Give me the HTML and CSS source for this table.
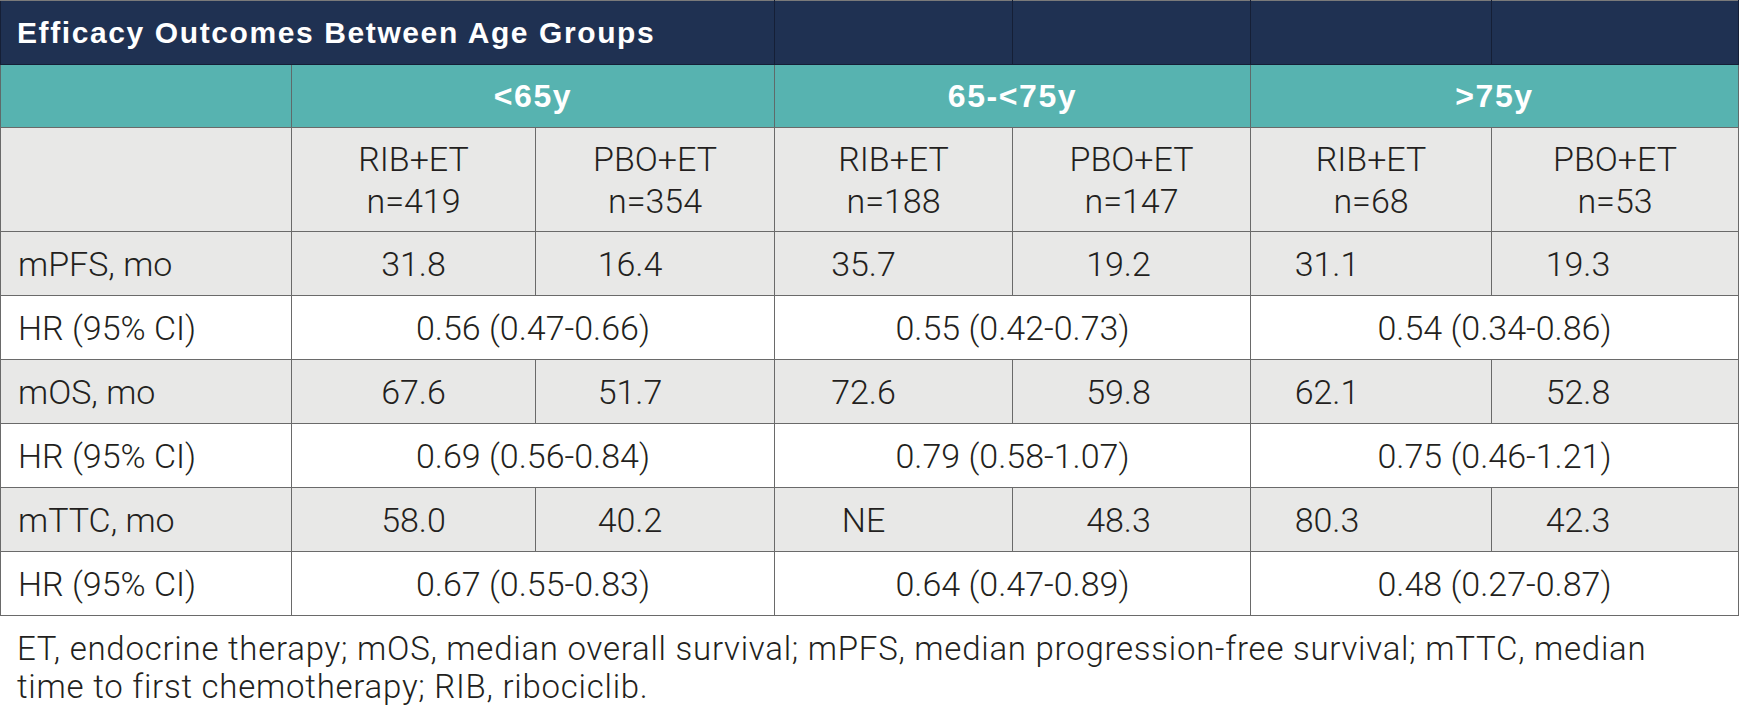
FILE: index.html
```html
<!DOCTYPE html>
<html lang="en">
<head>
<meta charset="utf-8">
<title>Efficacy Outcomes Between Age Groups</title>
<link rel="stylesheet" href="styles.css">
</head>
<body>
<table class="outcomes">
  <colgroup>
    <col class="w-label">
    <col class="w-1">
    <col class="w-2">
    <col class="w-3">
    <col class="w-4">
    <col class="w-5">
    <col class="w-6">
  </colgroup>
  <thead>
    <tr class="row-title">
      <th colspan="3" class="title">Efficacy Outcomes Between Age Groups</th>
      <th></th>
      <th></th>
      <th></th>
      <th></th>
    </tr>
    <tr class="row-groups">
      <th></th>
      <th colspan="2">&lt;65y</th>
      <th colspan="2">65-&lt;75y</th>
      <th colspan="2">&gt;75y</th>
    </tr>
    <tr class="row-arms shade">
      <th></th>
      <th>RIB+ET<br>n=419</th>
      <th>PBO+ET<br>n=354</th>
      <th>RIB+ET<br>n=188</th>
      <th>PBO+ET<br>n=147</th>
      <th>RIB+ET<br>n=68</th>
      <th>PBO+ET<br>n=53</th>
    </tr>
  </thead>
  <tbody>
    <tr class="shade">
      <td class="label">mPFS, mo</td>
      <td class="v v1">31.8</td>
      <td class="v v2">16.4</td>
      <td class="v v3">35.7</td>
      <td class="v v4">19.2</td>
      <td class="v v5">31.1</td>
      <td class="v v6">19.3</td>
    </tr>
    <tr>
      <td class="label">HR (95% CI)</td>
      <td colspan="2" class="hr">0.56 (0.47-0.66)</td>
      <td colspan="2" class="hr">0.55 (0.42-0.73)</td>
      <td colspan="2" class="hr">0.54 (0.34-0.86)</td>
    </tr>
    <tr class="shade">
      <td class="label">mOS, mo</td>
      <td class="v v1">67.6</td>
      <td class="v v2">51.7</td>
      <td class="v v3">72.6</td>
      <td class="v v4">59.8</td>
      <td class="v v5">62.1</td>
      <td class="v v6">52.8</td>
    </tr>
    <tr>
      <td class="label">HR (95% CI)</td>
      <td colspan="2" class="hr">0.69 (0.56-0.84)</td>
      <td colspan="2" class="hr">0.79 (0.58-1.07)</td>
      <td colspan="2" class="hr">0.75 (0.46-1.21)</td>
    </tr>
    <tr class="shade">
      <td class="label">mTTC, mo</td>
      <td class="v v1">58.0</td>
      <td class="v v2">40.2</td>
      <td class="v v3">NE</td>
      <td class="v v4">48.3</td>
      <td class="v v5">80.3</td>
      <td class="v v6">42.3</td>
    </tr>
    <tr>
      <td class="label">HR (95% CI)</td>
      <td colspan="2" class="hr">0.67 (0.55-0.83)</td>
      <td colspan="2" class="hr">0.64 (0.47-0.89)</td>
      <td colspan="2" class="hr">0.48 (0.27-0.87)</td>
    </tr>
  </tbody>
</table>
<p class="footnote">ET, endocrine therapy; mOS, median overall survival; mPFS, median progression-free survival; mTTC, median time to first chemotherapy; RIB, ribociclib.</p>
</body>
</html>
```
FILE: styles.css
```css
html, body {
  margin: 0;
  padding: 0;
  background: #ffffff;
}

body {
  font-family: Roboto, "Liberation Sans", sans-serif;
  color: #231f20;
}

.outcomes {
  border-collapse: collapse;
  table-layout: fixed;
  width: 1738px;
  font-family: Roboto, "Liberation Sans", sans-serif;
  font-weight: 300;
  font-size: 34px;
}

.w-label { width: 291px; }
.w-1 { width: 244px; }
.w-2 { width: 239px; }
.w-3 { width: 238px; }
.w-4 { width: 238px; }
.w-5 { width: 241px; }
.w-6 { width: 247px; }

.outcomes th,
.outcomes td {
  border: 1.5px solid #6a6a6a;
  padding: 0;
  text-align: center;
  vertical-align: middle;
  font-weight: 300;
}

.row-title th {
  background: #1f3152;
  height: 63px;
  border-color: #151f36;
  border-top-color: #7a7a7a;
}

.row-title .title {
  color: #ffffff;
  text-align: left;
  padding-left: 16px;
  font-family: "Liberation Sans", Arial, sans-serif;
  font-weight: 700;
  font-size: 30px;
  letter-spacing: 1.6px;
}

.row-groups th {
  background: #57b3b0;
  height: 62px;
  color: #ffffff;
  font-family: "Liberation Sans", Arial, sans-serif;
  font-weight: 700;
  font-size: 32px;
  letter-spacing: 1.6px;
  border-top-color: #1b2740;
  border-left-color: #5f6a6a;
  border-right-color: #5f6a6a;
}

.row-arms th {
  height: 103px;
  line-height: 42px;
  color: #231f20;
}

.shade th,
.shade td {
  background: #e8e8e7;
}

.outcomes tbody td {
  height: 63px;
}

.label {
  text-align: left !important;
  padding-left: 17px !important;
}

.v2 { padding-right: 50px !important; }
.v3 { padding-right: 60px !important; }
.v4 { padding-right: 26px !important; }
.v5 { padding-right: 88px !important; }
.v6 { padding-right: 74px !important; }

.footnote {
  width: 1650px;
  margin: 14px 0 0;
  padding: 0 17px;
  font-family: Roboto, "Liberation Sans", sans-serif;
  font-weight: 300;
  font-size: 33px;
  letter-spacing: 0.75px;
  line-height: 38px;
  color: #231f20;
}
```
